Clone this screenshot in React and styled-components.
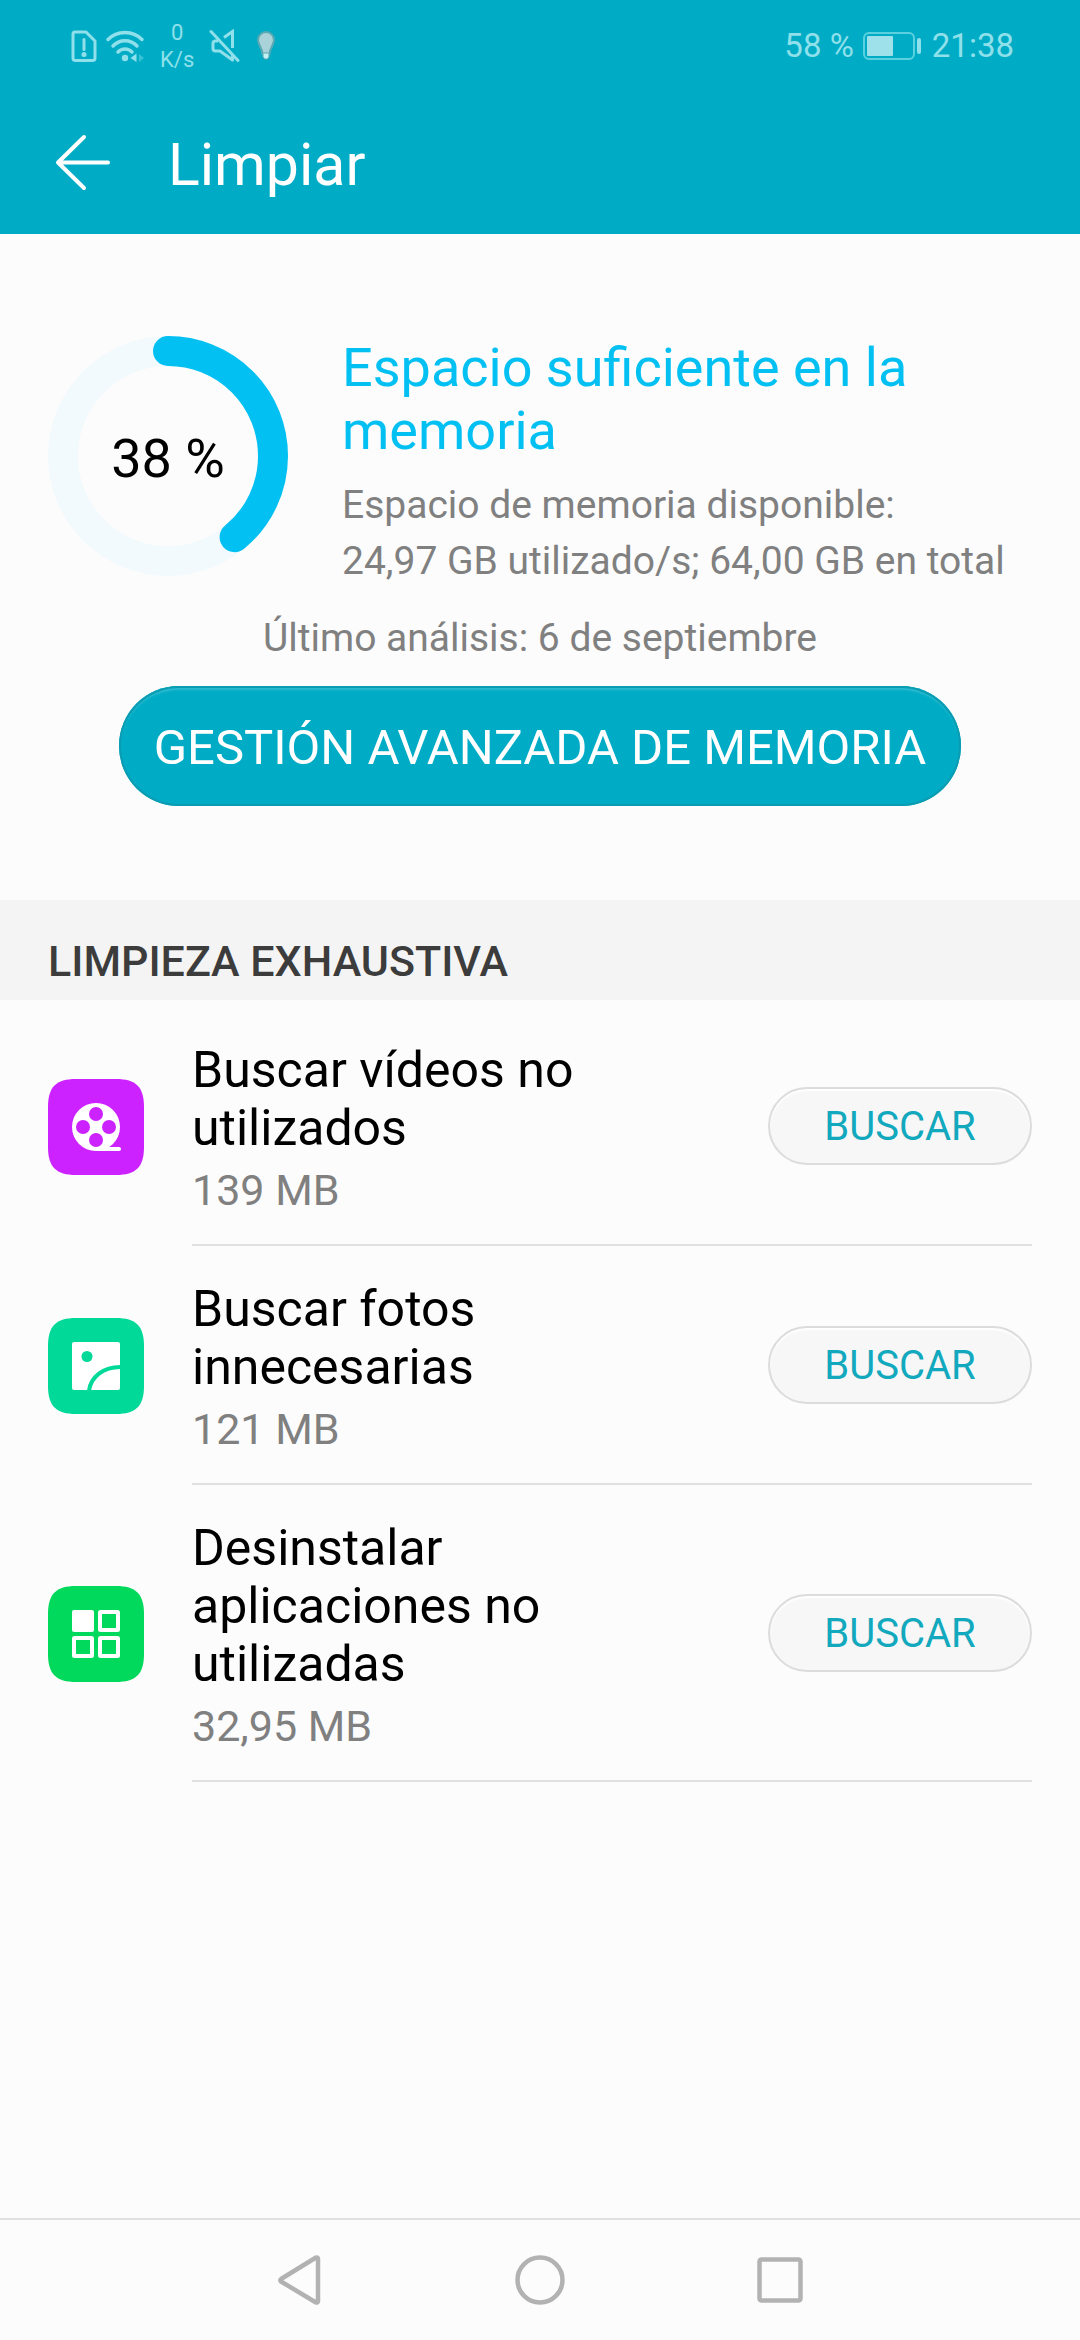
import styled, { createGlobalStyle } from 'styled-components';

const colors = {
  primary: '#00acc5',
  accent: '#03c0f3',
  track: '#f2fafd',
  background: '#fcfcfc',
  section: '#f4f4f4',
  line: '#e0e0e0',
  weak: '#808080',
  status: '#8fe0ea',
  nav: '#b2b2b2',
};

const GlobalStyle = createGlobalStyle`
  * {
    box-sizing: border-box;
  }

  body {
    margin: 0;
    background-color: ${colors.background};
    font-family: Roboto, 'Liberation Sans', sans-serif;
    color: #000;
  }

  h1, h2, h3, p, ul {
    margin: 0;
    padding: 0;
    font-weight: 400;
  }

  button {
    border: none;
    padding: 0;
    background: none;
    font-family: inherit;
    cursor: pointer;
  }

  svg {
    display: block;
    flex-shrink: 0;
  }
`;

const Screen = styled.div`
  display: flex;
  flex-direction: column;
  min-height: 100vh;
`;

const TopArea = styled.header`
  background-color: ${colors.primary};
`;

const StatusBar = styled.div`
  display: flex;
  align-items: center;
  justify-content: space-between;
  height: 90px;
  padding: 0 66px 0 70px;
  color: ${colors.status};
`;

const StatusGroup = styled.div`
  display: flex;
  align-items: center;
  gap: ${({ $gap }) => $gap}px;
  padding-top: 2px;
  font-size: 33px;
  line-height: 40px;
`;

const NetSpeed = styled.div`
  padding: 0 8px;
  font-size: 22px;
  line-height: 27px;
  text-align: center;
`;

const TitleBar = styled.div`
  display: flex;
  align-items: center;
  gap: 56px;
  height: 144px;
  padding: 0 54px;
`;

const BackButton = styled.button`
  color: #fff;
`;

const PageTitle = styled.h1`
  padding-top: 5px;
  font-size: 59px;
  line-height: 72px;
  color: #fff;
`;

const Summary = styled.section`
  display: flex;
  flex-direction: column;
  align-items: center;
  padding: 102px 48px 94px;
`;

const MemoryInfo = styled.div`
  display: flex;
  align-items: flex-start;
  gap: 54px;
  width: 100%;
`;

const Ring = styled.div`
  display: grid;
  flex-shrink: 0;
  place-items: center;

  > * {
    grid-area: 1 / 1;
  }
`;

const RingLabel = styled.span`
  padding-top: 5px;
  font-size: 54px;
  line-height: 64px;
`;

const MemoryText = styled.div`
  flex: 1;
  min-width: 0;
`;

const MemoryTitle = styled.h2`
  font-size: 54px;
  line-height: 63px;
  color: ${colors.accent};
`;

const MemoryDetail = styled.p`
  margin-top: 15px;
  font-size: 39px;
  line-height: 56px;
  color: ${colors.weak};
`;

const LastScan = styled.p`
  margin: 24px 0 23px;
  font-size: 39px;
  line-height: 50px;
  color: ${colors.weak};
`;

const ManageButton = styled.button`
  height: 120px;
  padding: 4px 35px 0;
  border-radius: 60px;
  background-color: ${colors.primary};
  box-shadow:
    inset 0 0 0 2px #0a9cb2,
    inset 0 4px 2px #2bbad0;
  font-size: 49px;
  line-height: 58px;
  color: #fff;
`;

const SectionTitle = styled.h2`
  padding: 36px 48px 14px;
  background-color: ${colors.section};
  font-weight: 500;
  font-size: 43px;
  line-height: 50px;
  color: #3c3c3c;
`;

const List = styled.ul`
  flex: 1;
  padding: 7px 48px 0;
  list-style: none;
`;

const Row = styled.li`
  display: flex;
  align-items: stretch;
  gap: 48px;
`;

const RowIcon = styled.div`
  display: flex;
  align-items: center;
`;

const RowBody = styled.div`
  display: flex;
  flex: 1;
  align-items: center;
  gap: 48px;
  border-bottom: 2px solid ${colors.line};
`;

const RowText = styled.div`
  flex: 1;
  min-width: 0;
  padding: 34px 0 29px;
`;

const RowTitle = styled.h3`
  font-size: 50px;
  line-height: 58px;
`;

const RowSize = styled.p`
  margin-top: 8px;
  font-size: 43px;
  line-height: 50px;
  color: ${colors.weak};
`;

const SearchButton = styled.button`
  flex-shrink: 0;
  width: 264px;
  height: 78px;
  padding-top: 3px;
  border: 2px solid #dcdcdc;
  border-radius: 39px;
  background-color: #f7f7f7;
  box-shadow: inset 0 2px 2px #fff;
  font-size: 40px;
  line-height: 48px;
  color: #12a8bd;
`;

const NavBar = styled.nav`
  display: flex;
  height: 122px;
  padding: 0 180px;
  border-top: 2px solid ${colors.line};
`;

const NavButton = styled.button`
  display: flex;
  flex: 1;
  align-items: center;
  justify-content: center;
  color: ${colors.nav};
`;

function SimAlertIcon() {
  return (
    <svg width="28" height="34" viewBox="0 0 28 34" fill="none" stroke="currentColor" strokeWidth="3">
      <path d="M5 3h11l9 9v17a2.500 2.500 0 0 1-2.500 2.500h-17A2.500 2.500 0 0 1 3 29V5a2 2 0 0 1 2-2z" strokeLinejoin="round" />
      <path d="M14 10.500v10" strokeLinecap="round" />
      <circle cx="14" cy="25.500" r="2.500" fill="currentColor" stroke="none" />
    </svg>
  );
}

function WifiIcon() {
  return (
    <svg width="40" height="34" viewBox="0 0 40 34" fill="none">
      <g stroke="currentColor" strokeWidth="3.500" strokeLinecap="round">
        <path d="M3 10.500C12 1 28 1 37 10.500" />
        <path d="M8 17c6.500-7 17.500-7 24 0" />
        <path d="M13 23c4-4 10-4 14 0" />
      </g>
      <circle cx="20" cy="29" r="3.200" fill="currentColor" />
      <path d="M31 25v8M31.500 24.500V33l-6-4z" fill="currentColor" />
      <path d="M34 25l5 4-5 4z" fill="currentColor" opacity=".4" />
    </svg>
  );
}

function MuteIcon() {
  return (
    <svg width="32" height="34" viewBox="0 0 32 34" fill="none" stroke="currentColor" strokeWidth="3">
      <path d="M2 2.500l27 29" strokeLinecap="round" />
      <path d="M15 8.500l8.500-6V19" />
      <path d="M9 12H6.500A2.500 2.500 0 0 0 4 14.500v5A2.500 2.500 0 0 0 6.500 22H11l12.500 9v-5" strokeLinejoin="round" />
    </svg>
  );
}

function BulbIcon() {
  return (
    <svg width="36" height="32" viewBox="-8 0 36 32">
      <path d="M10 2a8 8 0 0 1 8 8c0 5-4 7-4.500 14h-7C6 17 2 15 2 10a8 8 0 0 1 8-8z" fill="#a9d3d8" stroke="#5aa9b4" strokeWidth="2" />
      <path d="M7 23h6v4l-1.500 2h-3L7 27z" fill="#c3f0f2" stroke="#5aa9b4" />
    </svg>
  );
}

function BatteryIcon() {
  return (
    <svg width="60" height="28" viewBox="0 0 60 28">
      <rect x="1" y="1" width="50" height="26" rx="5" fill="none" stroke="#5bd0de" strokeWidth="2" />
      <rect x="4" y="4" width="26" height="20" rx="1" fill="#9fe1ea" />
      <rect x="54" y="6" width="4" height="16" rx="2" fill="currentColor" />
    </svg>
  );
}

function BackIcon() {
  return (
    <svg width="58" height="58" viewBox="0 0 58 58" fill="none" stroke="currentColor" strokeWidth="4" strokeLinecap="round" strokeLinejoin="round">
      <path d="M30 4L4 29.500 30 55M5 29.500h49" />
    </svg>
  );
}

// rounded tile shared by the three list icons
function Tile({ color, children }) {
  return (
    <svg width="96" height="96" viewBox="0 0 96 96">
      <path
        d="M0 28C0 8 8 0 28 0h40c20 0 28 8 28 28v40c0 20-8 28-28 28H28C8 96 0 88 0 68z"
        fill={color}
      />
      {children}
    </svg>
  );
}

function VideoIcon() {
  const color = '#cc22ff';
  return (
    <Tile color={color}>
      <circle cx="48" cy="48" r="24" fill="#fff" />
      <path d="M48 72h23a2 2 0 0 0 0-4H61l-8-4z" fill="#fff" />
      <g fill={color}>
        <circle cx="48" cy="35" r="7" />
        <circle cx="35" cy="48" r="7" />
        <circle cx="61" cy="48" r="7" />
        <circle cx="48" cy="61" r="7" />
      </g>
    </Tile>
  );
}

function PhotoIcon() {
  const color = '#00d998';
  return (
    <Tile color={color}>
      <rect x="24" y="24" width="48" height="48" rx="2" fill="#fff" />
      <circle cx="39" cy="38.500" r="5.500" fill={color} />
      <path d="M41 72.500C43 59 55 49 72.500 49" fill="none" stroke={color} strokeWidth="4" />
    </Tile>
  );
}

function AppsIcon() {
  return (
    <Tile color="#00d95b">
      <rect x="24" y="24" width="22" height="22" rx="2" fill="#fff" />
      <g fill="none" stroke="#fff" strokeWidth="4">
        <rect x="52" y="26" width="18" height="18" rx="0.500" />
        <rect x="26" y="52" width="18" height="18" rx="0.500" />
        <rect x="52" y="52" width="18" height="18" rx="0.500" />
      </g>
    </Tile>
  );
}

function UsageRing({ used, total, label }) {
  const length = 2 * Math.PI * 105;
  const filled = (used / total) * length;

  return (
    <Ring>
      <svg width="240" height="240" viewBox="0 0 240 240" fill="none" strokeWidth="30">
        <circle cx="120" cy="120" r="105" stroke={colors.track} />
        <circle
          cx="120"
          cy="120"
          r="105"
          stroke={colors.accent}
          strokeLinecap="round"
          strokeDasharray={`${filled} ${length}`}
          transform="rotate(-90 120 120)"
        />
      </svg>
      <RingLabel>{label}</RingLabel>
    </Ring>
  );
}

const items = [
  { id: 'videos', title: 'Buscar vídeos no utilizados', size: '139 MB', Icon: VideoIcon },
  { id: 'photos', title: 'Buscar fotos innecesarias', size: '121 MB', Icon: PhotoIcon },
  { id: 'apps', title: 'Desinstalar aplicaciones no utilizadas', size: '32,95 MB', Icon: AppsIcon },
];

export default function App() {
  return (
    <Screen>
      <GlobalStyle />
      <TopArea>
        <StatusBar>
          <StatusGroup $gap={7}>
            <SimAlertIcon />
            <WifiIcon />
            <NetSpeed>
              0<br />
              K/s
            </NetSpeed>
            <MuteIcon />
            <BulbIcon />
          </StatusGroup>
          <StatusGroup $gap={9}>
            <span>58 %</span>
            <BatteryIcon />
            <span>21:38</span>
          </StatusGroup>
        </StatusBar>
        <TitleBar>
          <BackButton type="button" aria-label="Atrás">
            <BackIcon />
          </BackButton>
          <PageTitle>Limpiar</PageTitle>
        </TitleBar>
      </TopArea>

      <Summary>
        <MemoryInfo>
          <UsageRing used={24.97} total={64} label="38 %" />
          <MemoryText>
            <MemoryTitle>Espacio suficiente en la memoria</MemoryTitle>
            <MemoryDetail>
              Espacio de memoria disponible:
              <br />
              24,97 GB utilizado/s; 64,00 GB en total
            </MemoryDetail>
          </MemoryText>
        </MemoryInfo>
        <LastScan>Último análisis: 6 de septiembre</LastScan>
        <ManageButton type="button">GESTIÓN AVANZADA DE MEMORIA</ManageButton>
      </Summary>

      <SectionTitle>LIMPIEZA EXHAUSTIVA</SectionTitle>
      <List>
        {items.map(({ id, title, size, Icon }) => (
          <Row key={id}>
            <RowIcon>
              <Icon />
            </RowIcon>
            <RowBody>
              <RowText>
                <RowTitle id={id}>{title}</RowTitle>
                <RowSize>{size}</RowSize>
              </RowText>
              <SearchButton type="button" aria-describedby={id}>
                BUSCAR
              </SearchButton>
            </RowBody>
          </Row>
        ))}
      </List>

      <NavBar>
        <NavButton type="button" aria-label="Volver">
          <svg width="50" height="54" viewBox="0 0 50 54" fill="none" stroke="currentColor" strokeWidth="4.500" strokeLinejoin="round">
            <path d="M43 5.500a1.500 1.500 0 0 0-2-1L6 26a1.500 1.500 0 0 0 0 2.500L41 49.500a1.500 1.500 0 0 0 2-1z" />
          </svg>
        </NavButton>
        <NavButton type="button" aria-label="Inicio">
          <svg width="50" height="50" viewBox="0 0 50 50" fill="none" stroke="currentColor" strokeWidth="4.500">
            <circle cx="25" cy="25" r="22.500" />
          </svg>
        </NavButton>
        <NavButton type="button" aria-label="Recientes">
          <svg width="46" height="46" viewBox="0 0 46 46" fill="none" stroke="currentColor" strokeWidth="4.500">
            <rect x="2.500" y="2.500" width="41" height="41" rx="2" />
          </svg>
        </NavButton>
      </NavBar>
    </Screen>
  );
}
